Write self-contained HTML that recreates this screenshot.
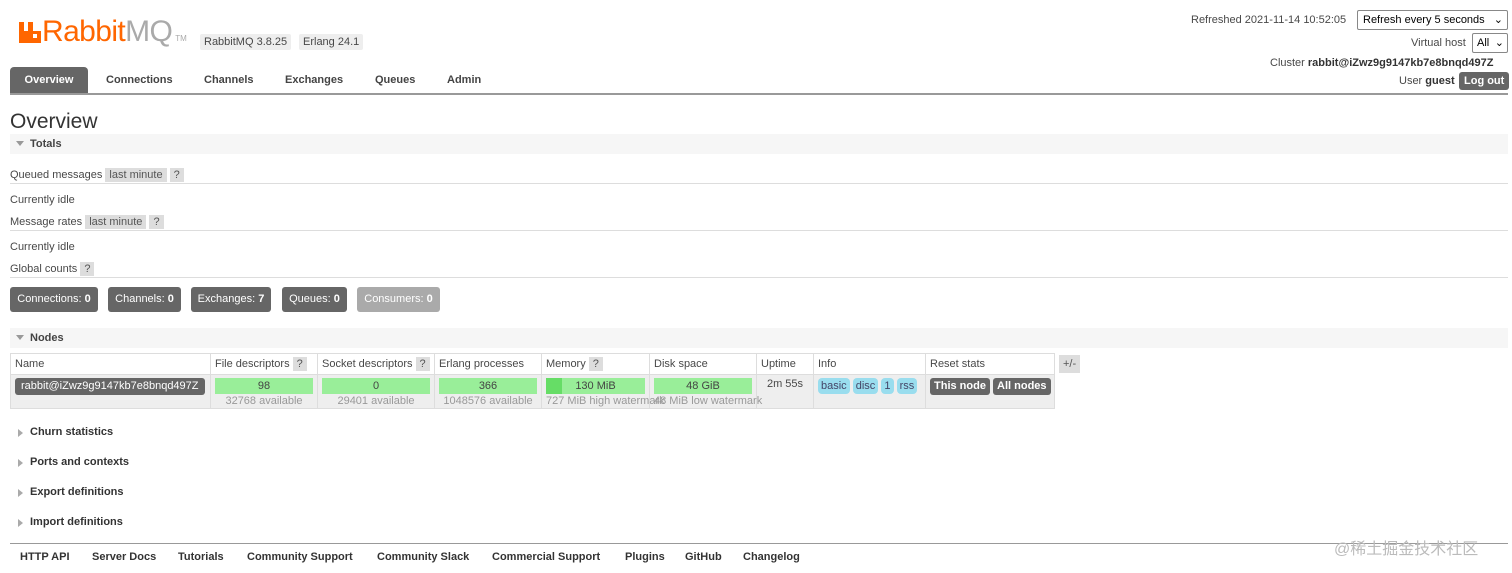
<!DOCTYPE html>
<html><head><meta charset="utf-8"><style>
*{margin:0;padding:0;box-sizing:border-box}
body{width:1512px;height:573px;overflow:hidden;background:#fff;font-family:"Liberation Sans","DejaVu Sans",sans-serif;font-size:11px;color:#484848;position:relative}
.a{position:absolute;white-space:nowrap}
.badge{background:#eee;padding:2px 4px;border-radius:2px}
.tab{position:absolute;top:67px;height:26px;line-height:27px;font-weight:bold;color:#444;font-size:11px}
.hr{position:absolute;left:10px;width:1498px;height:1px;background:#ddd}
.sec{position:absolute;left:10px;width:1498px;height:20px;background:#f6f6f6;font-weight:bold;color:#444;line-height:20px;padding-left:20px}
.tri{position:absolute;left:6px;top:7px;width:0;height:0;border-left:4px solid transparent;border-right:4px solid transparent;border-top:5px solid #999}
.btn{position:absolute;top:287px;height:25px;line-height:25px;background:#666;color:#fff;border-radius:3px;text-align:center;font-size:11px}
.q{background:#ddd;padding:1px 4px;color:#555}
table{position:absolute;left:10px;top:353px;border-collapse:collapse;background:#eee;table-layout:fixed;width:1044px}
td{border:1px solid #ddd;font-size:11px;vertical-align:top;padding:0 4px;white-space:nowrap;overflow:visible}
tr.h td{background:#fff;height:20px;line-height:20px}
tr.d td{height:32px;padding-top:3px}
.g{background:#99ee99;height:16px;line-height:16px;text-align:center;color:#444}
.sub{color:#999;text-align:center;line-height:14px}
.pill{display:inline-block;background:#99ddee;border-radius:4px;padding:0 3px;line-height:16px;color:#446}
.dk{display:inline-block;background:#666;color:#fff;border-radius:3px;padding:0 6px;line-height:17px;font-weight:bold}
.col{position:absolute;left:10px;font-weight:bold;color:#333;padding-left:20px}
.rt{position:absolute;left:8px;top:3px;width:0;height:0;border-top:4px solid transparent;border-bottom:4px solid transparent;border-left:5px solid #aaa}
.f{position:absolute;top:551px;font-weight:bold;color:#333}
</style></head><body>
<svg class="a" style="left:19px;top:22px" width="22" height="21" viewBox="0 0 22 21"><path d="M0 0h5v9h4V0h5v9h8v12H0z" fill="#f60"/><rect x="14" y="12" width="4" height="4" fill="#fff"/></svg>
<div class="a" style="left:42px;top:15px;font-size:30px;color:#f60;letter-spacing:-0.6px">Rabbit<span style="color:#aaa">MQ</span><span style="font-size:8px;color:#aaa;margin-left:3px;letter-spacing:0">TM</span></div>
<div class="a badge" style="left:200px;top:34px">RabbitMQ 3.8.25</div>
<div class="a badge" style="left:299px;top:34px">Erlang 24.1</div>

<div class="a" style="left:1191px;top:14px">Refreshed 2021-11-14 10:52:05</div>
<div class="a" style="left:1357px;top:10px;width:151px;height:20px;border:1px solid #888;border-radius:2px;color:#000;padding:3px 5px;font-size:11px">Refresh every 5 seconds<span style="position:absolute;right:4px;top:2px">⌄</span></div>
<div class="a" style="left:1411px;top:37px">Virtual host</div>
<div class="a" style="left:1472px;top:33px;width:36px;height:20px;border:1px solid #888;border-radius:2px;color:#000;padding:3px 4px">All<span style="position:absolute;right:3px;top:2px">⌄</span></div>
<div class="a" style="left:1270px;top:57px">Cluster <b style="color:#333">rabbit@iZwz9g9147kb7e8bnqd497Z</b></div>
<div class="a" style="left:1399px;top:75px">User <b style="color:#333">guest</b></div>
<div class="a dk" style="left:1459px;top:72px;line-height:18px;padding:0 5px">Log out</div>

<div class="tab" style="left:10px;width:78px;background:#666;color:#fff;text-align:center;border-radius:4px 4px 0 0">Overview</div>
<div class="tab" style="left:106px">Connections</div>
<div class="tab" style="left:204px">Channels</div>
<div class="tab" style="left:285px">Exchanges</div>
<div class="tab" style="left:375px">Queues</div>
<div class="tab" style="left:447px">Admin</div>
<div class="a" style="left:10px;top:93px;width:1498px;height:2px;background:#999"></div>

<div class="a" style="left:10px;top:110px;font-size:21px;color:#333">Overview</div>
<div class="sec" style="top:134px"><div class="tri"></div>Totals</div>
<div class="a" style="left:10px;top:169px">Queued messages <span class="q">last minute</span> <span class="q">?</span></div>
<div class="hr" style="top:183px"></div>
<div class="a" style="left:10px;top:194px">Currently idle</div>
<div class="a" style="left:10px;top:216px">Message rates <span class="q">last minute</span> <span class="q">?</span></div>
<div class="hr" style="top:230px"></div>
<div class="a" style="left:10px;top:241px">Currently idle</div>
<div class="a" style="left:10px;top:263px">Global counts <span class="q">?</span></div>
<div class="hr" style="top:277px"></div>
<div class="btn" style="left:10px;width:88px">Connections: <b>0</b></div>
<div class="btn" style="left:108px;width:73px">Channels: <b>0</b></div>
<div class="btn" style="left:191px;width:80px">Exchanges: <b>7</b></div>
<div class="btn" style="left:282px;width:65px">Queues: <b>0</b></div>
<div class="btn" style="left:357px;width:83px;background:#aaa">Consumers: <b>0</b></div>

<div class="sec" style="top:328px"><div class="tri"></div>Nodes</div>
<table>
<colgroup><col style="width:200px"><col style="width:107px"><col style="width:117px"><col style="width:107px"><col style="width:108px"><col style="width:107px"><col style="width:57px"><col style="width:112px"><col style="width:129px"></colgroup>
<tr class="h"><td>Name</td><td>File descriptors <span class="q">?</span></td><td>Socket descriptors <span class="q">?</span></td><td>Erlang processes</td><td>Memory <span class="q">?</span></td><td>Disk space</td><td>Uptime</td><td>Info</td><td>Reset stats</td></tr>
<tr class="d"><td><span class="dk" style="font-weight:normal;padding:0 6px">rabbit@iZwz9g9147kb7e8bnqd497Z</span></td>
<td><div class="g">98</div><div class="sub">32768 available</div></td>
<td><div class="g">0</div><div class="sub">29401 available</div></td>
<td><div class="g">366</div><div class="sub">1048576 available</div></td>
<td style="position:relative"><div class="g" style="background:linear-gradient(90deg,#66dd66 16%,#99ee99 16%)">130 MiB</div><div class="sub" style="text-align:left;position:absolute;left:4px">727 MiB high watermark</div></td>
<td style="position:relative"><div class="g">48 GiB</div><div class="sub" style="text-align:left;position:absolute;left:4px">48 MiB low watermark</div></td>
<td style="text-align:center">2m 55s</td>
<td><span class="pill">basic</span> <span class="pill">disc</span> <span class="pill">1</span> <span class="pill">rss</span></td>
<td><span class="dk" style="padding:0 4px">This node</span> <span class="dk" style="padding:0 4px">All nodes</span></td></tr>
</table>
<div class="a q" style="left:1059px;top:355px;line-height:16px">+/-</div>

<div class="col" style="top:426px"><div class="rt"></div>Churn statistics</div>
<div class="col" style="top:456px"><div class="rt"></div>Ports and contexts</div>
<div class="col" style="top:486px"><div class="rt"></div>Export definitions</div>
<div class="col" style="top:516px"><div class="rt"></div>Import definitions</div>
<div class="a" style="left:10px;top:543px;width:1498px;height:1px;background:#999"></div>
<div class="f" style="left:20px">HTTP API</div>
<div class="f" style="left:92px">Server Docs</div>
<div class="f" style="left:178px">Tutorials</div>
<div class="f" style="left:247px">Community Support</div>
<div class="f" style="left:377px">Community Slack</div>
<div class="f" style="left:492px">Commercial Support</div>
<div class="f" style="left:625px">Plugins</div>
<div class="f" style="left:685px">GitHub</div>
<div class="f" style="left:743px">Changelog</div>
<div class="a" style="left:1334px;top:535px;font-size:16px;color:#bbb;font-family:'Liberation Sans','Noto Sans CJK SC',sans-serif">@稀土掘金技术社区</div>
</body></html>
